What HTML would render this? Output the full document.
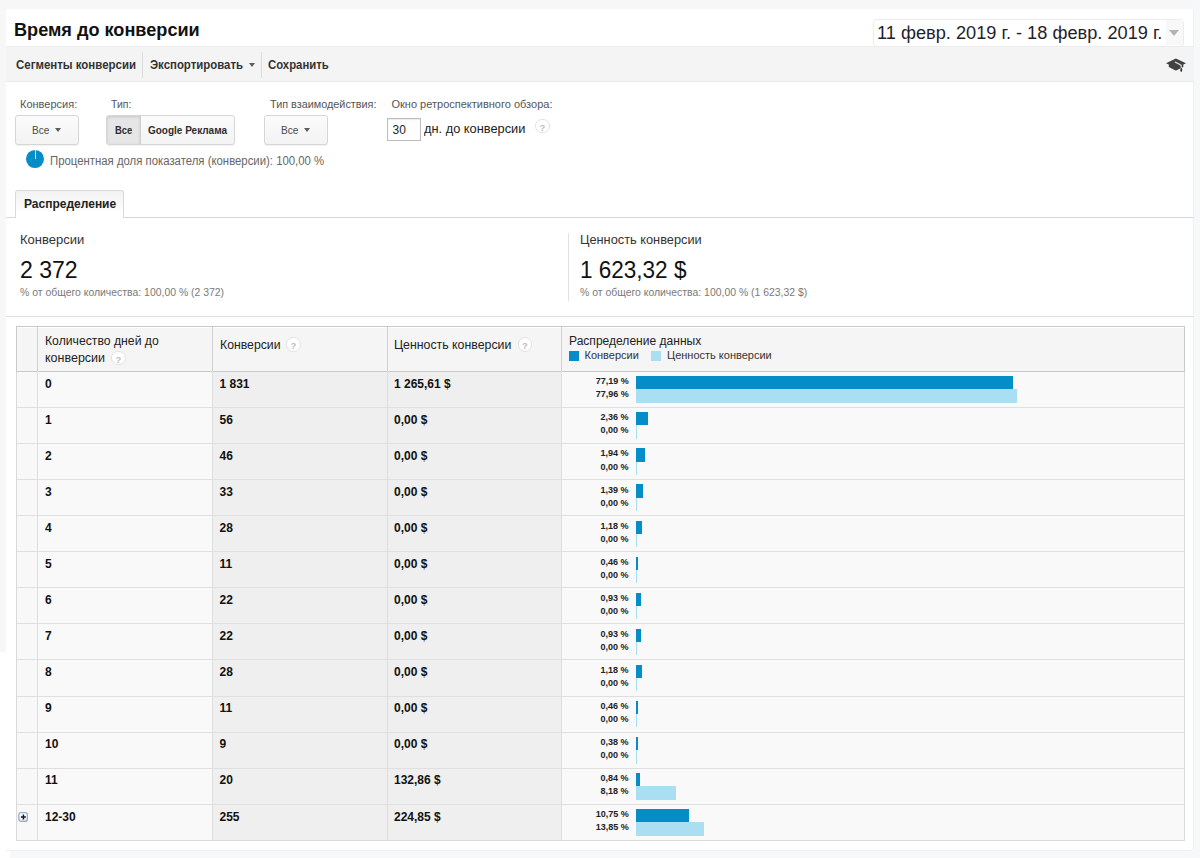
<!DOCTYPE html>
<html lang="ru">
<head>
<meta charset="utf-8">
<title>Время до конверсии</title>
<style>
*{box-sizing:border-box;margin:0;padding:0}
html,body{width:1200px;height:858px;overflow:hidden;background:#fff}
body{font-family:"Liberation Sans",sans-serif;color:#222;position:relative;font-size:12px}
.abs{position:absolute;white-space:nowrap}
/* outer strips */
#st{left:0;top:0;width:1200px;height:9px;background:#f7f7f7}
#sl{left:0;top:0;width:5.5px;height:652px;background:#f7f7f7}
#sr{left:1194px;top:0;width:6px;height:858px;background:#f7f8f9}
#sb{left:9.5px;top:851px;width:1191px;height:7px;background:#f7f8f9}
#panel{left:5.5px;top:9px;width:1188.5px;height:842px;background:#fff;border-radius:0 0 4px 0;border-right:1px solid #f1f1f1;border-bottom:1px solid #f1f1f1}
/* title */
#title{left:14.3px;top:17.6px;font-size:19px;font-weight:bold;color:#111;line-height:24px;transform-origin:0 50%;transform:scaleX(.953)}
#datebox{left:873px;top:19px;width:311px;height:27.5px;border:1px solid #ececec;border-radius:4px;background:#fff}
#datebtn{left:1166px;top:20px;width:17px;height:24.5px;background:#f8f8f8;border-radius:0 3px 3px 0}
#datearrow{left:1168.5px;top:30px;width:0;height:0;border-left:5.75px solid transparent;border-right:5.75px solid transparent;border-top:6px solid #b3b3b3}
#datetxt{left:877px;top:21px;font-size:18px;line-height:24px;color:#1f1f2b;transform-origin:0 50%}
/* toolbar */
#toolbar{left:5.5px;top:46px;width:1188.5px;height:36px;background:#f4f4f4;border-top:1px solid #ececec;border-bottom:1px solid #e9e9e9}
.tb{font-size:12px;font-weight:bold;color:#333;line-height:16px;top:56.75px;transform-origin:0 50%}
.tbdiv{top:51.5px;width:1px;height:26px;background:#dcdcdc}
.caret{width:0;height:0;border-left:3.6px solid transparent;border-right:3.6px solid transparent;border-top:4.2px solid #5c5c5c}
/* filters */
.flabel{font-size:11px;color:#555;top:97px;line-height:14px;transform-origin:0 50%}
.btn{top:115px;height:29.5px;border:1px solid #d6d6d6;border-radius:3px;background:linear-gradient(#fbfbfb,#f3f3f3);box-shadow:0 1px 1px rgba(0,0,0,.06)}
.btxt{font-size:11px;color:#4a4a4a;line-height:16px;top:122px;transform-origin:0 50%}
.btxtb{font-size:11px;font-weight:bold;color:#2e2e2e;line-height:16px;top:122px;transform-origin:0 50%}

.help{width:14.6px;height:14.6px;border:1px solid #e2e2e2;border-radius:50%;background:#fff;color:#bdbdbd;font-size:9.5px;font-weight:bold;line-height:15px;text-align:center}
#pie{left:26.4px;top:150.1px;width:17.8px;height:17.8px;border-radius:50%;background:#058dc7}
#pieline{left:34.55px;top:150.4px;width:1.5px;height:8.6px;background:#cfe7f5}
#pietxt{left:49.5px;top:152.7px;font-size:12.5px;color:#666;line-height:16px;transform-origin:0 50%;transform:scaleX(.909)}
#inp{left:387px;top:118px;width:33.5px;height:23px;border:1px solid #bdbdbd;background:#fff;box-shadow:inset 0 1px 1px rgba(0,0,0,.08)}
#inptxt{left:392.5px;top:121.5px;font-size:12px;color:#222;line-height:16px}
#dn{left:424px;top:120.5px;font-size:13px;color:#222;line-height:16px;transform-origin:0 50%}
/* tab */
#tabline{left:5.5px;top:217px;width:1188.5px;height:1px;background:#d9d9d9}
#tab{left:15px;top:190px;width:109px;height:28px;border:1px solid #d9d9d9;border-bottom:none;border-radius:3px 3px 0 0;background:linear-gradient(#f2f2f2,#fff 85%)}
#tabtxt{left:24px;top:195.5px;font-size:12px;font-weight:bold;color:#222;line-height:16px;transform-origin:0 50%}
/* summary */
.slabel{font-size:13px;color:#333;line-height:16px;top:231.5px;transform-origin:0 50%}
.sval{font-size:24px;color:#111;line-height:30px;top:255px;transform-origin:0 50%}
.ssub{font-size:10.5px;color:#7a7a7a;line-height:14px;top:285px;transform-origin:0 50%;transform:scaleX(.993)}
#vsep{left:568px;top:232.5px;width:1px;height:68.5px;background:#e2e2e2}
#hline{left:5.5px;top:316px;width:1188.5px;height:1px;background:#e0e0e0}
/* table */
#tbl{left:16px;top:326px;width:1168.5px;height:514.5px;border:1px solid #dadada;background:#f9f9f9}
#thead{left:16px;top:326px;width:1168.5px;height:45.5px;background:#f5f5f5;border:1px solid #c9c9c9;box-shadow:inset 0 1px 0 #fff}
#c0{left:17px;top:371.75px;width:20.5px;height:468px;background:#f8f8f8}
#c23{left:212px;top:371.75px;width:349.5px;height:468px;background:#efefef}
.vl{top:327px;width:1px;height:513px;background:#dedede}
.vlh{top:327px;width:1px;height:44px;background:#d0d0d0}
.rowline{left:17px;width:1167px;height:1px;background:#dfdfdf}
.th{font-size:12.5px;color:#222;line-height:17px;transform-origin:0 50%}
.leg{font-size:11px;color:#333;line-height:14px;top:348px;transform-origin:0 50%}
.sq{top:351px;width:10px;height:10px}
.cell{font-size:12px;font-weight:bold;color:#111;line-height:16px;transform-origin:0 50%}
.pct{right:571px;font-size:9.5px;font-weight:bold;color:#222;line-height:12px;transform-origin:100% 50%;transform:scaleX(.95)}
.bar1{left:636px;height:13.25px;background:#058dc7}
.bar2{left:636px;height:13.25px;background:#aadff3}
</style>
</head>
<body>
<div class="abs" id="st"></div>
<div class="abs" id="sl"></div>
<div class="abs" id="sr"></div>
<div class="abs" id="sb"></div>
<div class="abs" id="panel"></div>

<div class="abs" id="title">Время до конверсии</div>
<div class="abs" id="datebox"></div>
<div class="abs" id="datebtn"></div>
<div class="abs" id="datearrow"></div>
<div class="abs" id="datetxt" style="transform:scaleX(1.011)">11 февр. 2019 г. - 18 февр. 2019 г.</div>

<div class="abs" id="toolbar"></div>
<div class="abs tb" id="tb1" style="left:16px;transform:scaleX(0.955)">Сегменты конверсии</div>
<div class="abs tbdiv" style="left:142px"></div>
<div class="abs tb" id="tb2" style="left:150px;transform:scaleX(0.95)">Экспортировать</div>
<div class="abs caret" style="left:248.5px;top:63px"></div>
<div class="abs tbdiv" style="left:261px"></div>
<div class="abs tb" id="tb3" style="left:268px;transform:scaleX(0.946)">Сохранить</div>
<svg class="abs" id="cap" style="left:1160px;top:52px" width="32" height="26" viewBox="0 0 32 26">
  <path d="M6 11.2 L15.4 6.7 Q15.9 6.5 16.4 6.7 L26 11.2 L23.3 12.6 L23.3 15 L16.6 18.3 Q15.9 18.6 15.2 18.3 L8.8 15 L8.8 12.6 Z" fill="#414141"/>
  <path d="M15.3 10.2 L20.6 12.9 Q21.2 13.3 21.2 14 L21.2 16.5" fill="none" stroke="#cfcfcf" stroke-width="1.3" stroke-linecap="round"/>
  <ellipse cx="21.25" cy="17.9" rx="0.95" ry="1.9" fill="#2e2e2e"/>
</svg>


<!-- filters -->
<div class="abs flabel" id="fl1" style="left:20px">Конверсия:</div>
<div class="abs flabel" id="fl2" style="left:111px;transform:scaleX(0.95)">Тип:</div>
<div class="abs flabel" id="fl3" style="left:269.5px;transform:scaleX(0.985)">Тип взаимодействия:</div>
<div class="abs flabel" id="fl4" style="left:391.5px">Окно ретроспективного обзора:</div>

<div class="abs btn" style="left:15px;width:63.5px"></div>
<div class="abs btxt" id="b1" style="left:31.5px;transform:scaleX(.92)">Все</div>
<div class="abs caret" style="left:55px;top:128px"></div>

<div class="abs btn" style="left:106px;width:129px"></div>
<div class="abs" id="bact" style="left:107px;top:116px;width:33.5px;height:27.5px;background:#e6e6e6;border-radius:2px 0 0 2px;box-shadow:inset 0 1px 3px rgba(0,0,0,.14);border-right:1px solid #cfcfcf"></div>
<div class="abs btxtb" id="b2" style="left:114.5px;transform:scaleX(.86)">Все</div>
<div class="abs btxtb" id="b3" style="left:148px;transform:scaleX(0.908)">Google Реклама</div>

<div class="abs btn" style="left:264px;width:63.5px"></div>
<div class="abs btxt" id="b4" style="left:280.5px;transform:scaleX(.92)">Все</div>
<div class="abs caret" style="left:304px;top:128px"></div>

<div class="abs" id="inp"></div>
<div class="abs" id="inptxt">30</div>
<div class="abs" id="dn" style="transform:scaleX(0.985)">дн. до конверсии</div>
<div class="abs help" style="left:535.20px;top:118.70px">?</div>

<div class="abs" id="pie"></div>
<div class="abs" id="pieline"></div>
<div class="abs" id="pietxt">Процентная доля показателя (конверсии): 100,00 %</div>

<!-- tab -->
<div class="abs" id="tabline"></div>
<div class="abs" id="tab"></div>
<div class="abs" id="tabtxt">Распределение</div>

<!-- summary -->
<div class="abs slabel" id="sl1" style="left:20px">Конверсии</div>
<div class="abs sval" id="sv1" style="left:20px;transform:scaleX(0.96)">2 372</div>
<div class="abs ssub" id="ss1" style="left:20px">% от общего количества: 100,00 % (2 372)</div>
<div class="abs" id="vsep"></div>
<div class="abs slabel" id="sl2" style="left:579.5px;transform:scaleX(0.983)">Ценность конверсии</div>
<div class="abs sval" id="sv2" style="left:579.5px;transform:scaleX(0.938)">1 623,32 $</div>
<div class="abs ssub" id="ss2" style="left:579.5px">% от общего количества: 100,00 % (1 623,32 $)</div>
<div class="abs" id="hline"></div>

<!-- table -->
<div class="abs" id="tbl"></div>
<div class="abs" id="c0"></div>
<div class="abs" id="c23"></div>
<div class="abs" id="thead"></div>
<div class="abs vl" style="left:37px"></div>
<div class="abs vl" style="left:211.5px"></div>
<div class="abs vl" style="left:386.5px"></div>
<div class="abs vl" style="left:561px"></div>
<div class="abs vlh" style="left:37px"></div>
<div class="abs vlh" style="left:211.5px"></div>
<div class="abs vlh" style="left:386.5px"></div>
<div class="abs vlh" style="left:561px"></div>

<div class="abs th" id="th1a" style="left:45px;top:332.6px;transform:scaleX(0.977)">Количество дней до</div>
<div class="abs th" id="th1b" style="left:45px;top:349.5px">конверсии</div>
<div class="abs help" style="left:111.20px;top:350.70px">?</div>
<div class="abs th" id="th2" style="left:219.5px;top:336.5px;transform:scaleX(0.98)">Конверсии</div>
<div class="abs help" style="left:286.20px;top:337.20px">?</div>
<div class="abs th" id="th3" style="left:394px;top:336.5px;transform:scaleX(0.986)">Ценность конверсии</div>
<div class="abs help" style="left:517.70px;top:337.20px">?</div>
<div class="abs th" id="th4" style="left:569px;top:332.6px;transform:scaleX(0.964)">Распределение данных</div>
<div class="abs sq" style="left:569px;background:#058dc7"></div>
<div class="abs leg" id="lg1" style="left:584.5px">Конверсии</div>
<div class="abs sq" style="left:651px;background:#aadff3"></div>
<div class="abs leg" id="lg2" style="left:667px">Ценность конверсии</div>

<!--ROWS-->
<div class="abs cell" style="left:45px;top:375.50px">0</div>
<div class="abs cell" style="left:219.5px;top:375.50px">1 831</div>
<div class="abs cell" style="left:394px;top:375.50px">1 265,61 $</div>
<div class="abs pct" style="top:375.25px">77,19 %</div>
<div class="abs pct" style="top:388.35px">77,96 %</div>
<div class="abs bar1" style="top:376.15px;width:377.07px"></div>
<div class="abs bar2" style="top:389.40px;width:380.83px"></div>
<div class="abs rowline" style="top:406.84px"></div>
<div class="abs cell" style="left:45px;top:411.59px">1</div>
<div class="abs cell" style="left:219.5px;top:411.59px">56</div>
<div class="abs cell" style="left:394px;top:411.59px">0,00 $</div>
<div class="abs pct" style="top:411.34px">2,36 %</div>
<div class="abs pct" style="top:424.44px">0,00 %</div>
<div class="abs bar1" style="top:412.24px;width:11.53px"></div>
<div class="abs bar2" style="top:425.49px;width:1.00px"></div>
<div class="abs rowline" style="top:442.93px"></div>
<div class="abs cell" style="left:45px;top:447.68px">2</div>
<div class="abs cell" style="left:219.5px;top:447.68px">46</div>
<div class="abs cell" style="left:394px;top:447.68px">0,00 $</div>
<div class="abs pct" style="top:447.43px">1,94 %</div>
<div class="abs pct" style="top:460.53px">0,00 %</div>
<div class="abs bar1" style="top:448.33px;width:9.48px"></div>
<div class="abs bar2" style="top:461.58px;width:1.00px"></div>
<div class="abs rowline" style="top:479.02px"></div>
<div class="abs cell" style="left:45px;top:483.77px">3</div>
<div class="abs cell" style="left:219.5px;top:483.77px">33</div>
<div class="abs cell" style="left:394px;top:483.77px">0,00 $</div>
<div class="abs pct" style="top:483.52px">1,39 %</div>
<div class="abs pct" style="top:496.62px">0,00 %</div>
<div class="abs bar1" style="top:484.42px;width:6.79px"></div>
<div class="abs bar2" style="top:497.67px;width:1.00px"></div>
<div class="abs rowline" style="top:515.11px"></div>
<div class="abs cell" style="left:45px;top:519.86px">4</div>
<div class="abs cell" style="left:219.5px;top:519.86px">28</div>
<div class="abs cell" style="left:394px;top:519.86px">0,00 $</div>
<div class="abs pct" style="top:519.61px">1,18 %</div>
<div class="abs pct" style="top:532.71px">0,00 %</div>
<div class="abs bar1" style="top:520.51px;width:5.76px"></div>
<div class="abs bar2" style="top:533.76px;width:1.00px"></div>
<div class="abs rowline" style="top:551.20px"></div>
<div class="abs cell" style="left:45px;top:555.95px">5</div>
<div class="abs cell" style="left:219.5px;top:555.95px">11</div>
<div class="abs cell" style="left:394px;top:555.95px">0,00 $</div>
<div class="abs pct" style="top:555.70px">0,46 %</div>
<div class="abs pct" style="top:568.80px">0,00 %</div>
<div class="abs bar1" style="top:556.60px;width:2.25px"></div>
<div class="abs bar2" style="top:569.85px;width:1.00px"></div>
<div class="abs rowline" style="top:587.29px"></div>
<div class="abs cell" style="left:45px;top:592.04px">6</div>
<div class="abs cell" style="left:219.5px;top:592.04px">22</div>
<div class="abs cell" style="left:394px;top:592.04px">0,00 $</div>
<div class="abs pct" style="top:591.79px">0,93 %</div>
<div class="abs pct" style="top:604.89px">0,00 %</div>
<div class="abs bar1" style="top:592.69px;width:4.54px"></div>
<div class="abs bar2" style="top:605.94px;width:1.00px"></div>
<div class="abs rowline" style="top:623.38px"></div>
<div class="abs cell" style="left:45px;top:628.13px">7</div>
<div class="abs cell" style="left:219.5px;top:628.13px">22</div>
<div class="abs cell" style="left:394px;top:628.13px">0,00 $</div>
<div class="abs pct" style="top:627.88px">0,93 %</div>
<div class="abs pct" style="top:640.98px">0,00 %</div>
<div class="abs bar1" style="top:628.78px;width:4.54px"></div>
<div class="abs bar2" style="top:642.03px;width:1.00px"></div>
<div class="abs rowline" style="top:659.47px"></div>
<div class="abs cell" style="left:45px;top:664.22px">8</div>
<div class="abs cell" style="left:219.5px;top:664.22px">28</div>
<div class="abs cell" style="left:394px;top:664.22px">0,00 $</div>
<div class="abs pct" style="top:663.97px">1,18 %</div>
<div class="abs pct" style="top:677.07px">0,00 %</div>
<div class="abs bar1" style="top:664.87px;width:5.76px"></div>
<div class="abs bar2" style="top:678.12px;width:1.00px"></div>
<div class="abs rowline" style="top:695.56px"></div>
<div class="abs cell" style="left:45px;top:700.31px">9</div>
<div class="abs cell" style="left:219.5px;top:700.31px">11</div>
<div class="abs cell" style="left:394px;top:700.31px">0,00 $</div>
<div class="abs pct" style="top:700.06px">0,46 %</div>
<div class="abs pct" style="top:713.16px">0,00 %</div>
<div class="abs bar1" style="top:700.96px;width:2.25px"></div>
<div class="abs bar2" style="top:714.21px;width:1.00px"></div>
<div class="abs rowline" style="top:731.65px"></div>
<div class="abs cell" style="left:45px;top:736.40px">10</div>
<div class="abs cell" style="left:219.5px;top:736.40px">9</div>
<div class="abs cell" style="left:394px;top:736.40px">0,00 $</div>
<div class="abs pct" style="top:736.15px">0,38 %</div>
<div class="abs pct" style="top:749.25px">0,00 %</div>
<div class="abs bar1" style="top:737.05px;width:1.86px"></div>
<div class="abs bar2" style="top:750.30px;width:1.00px"></div>
<div class="abs rowline" style="top:767.74px"></div>
<div class="abs cell" style="left:45px;top:772.49px">11</div>
<div class="abs cell" style="left:219.5px;top:772.49px">20</div>
<div class="abs cell" style="left:394px;top:772.49px">132,86 $</div>
<div class="abs pct" style="top:772.24px">0,84 %</div>
<div class="abs pct" style="top:785.34px">8,18 %</div>
<div class="abs bar1" style="top:773.14px;width:4.10px"></div>
<div class="abs bar2" style="top:786.39px;width:39.96px"></div>
<div class="abs rowline" style="top:803.83px"></div>
<div class="abs cell" style="left:45px;top:808.58px">12-30</div>
<div class="abs cell" style="left:219.5px;top:808.58px">255</div>
<div class="abs cell" style="left:394px;top:808.58px">224,85 $</div>
<div class="abs pct" style="top:808.33px">10,75 %</div>
<div class="abs pct" style="top:821.43px">13,85 %</div>
<div class="abs bar1" style="top:809.23px;width:52.51px"></div>
<div class="abs bar2" style="top:822.48px;width:67.66px"></div>
<!--/ROWS-->
<svg class="abs" id="plus" style="left:17px;top:811px" width="12" height="12" viewBox="0 0 12 12"><defs><linearGradient id="pg" x1="0" y1="0" x2="0" y2="1"><stop offset="0.45" stop-color="#fff"/><stop offset="1" stop-color="#ecdcc6"/></linearGradient></defs><rect x="1.85" y="1.6" width="8.5" height="8.8" rx="2.2" ry="2.2" fill="url(#pg)" stroke="#8eaed4" stroke-width="1.3"/><path d="M3.9 6 H8.9 M6.4 3.5 V8.5" stroke="#1a1a1a" stroke-width="1.5" fill="none"/></svg>
</body>
</html>
